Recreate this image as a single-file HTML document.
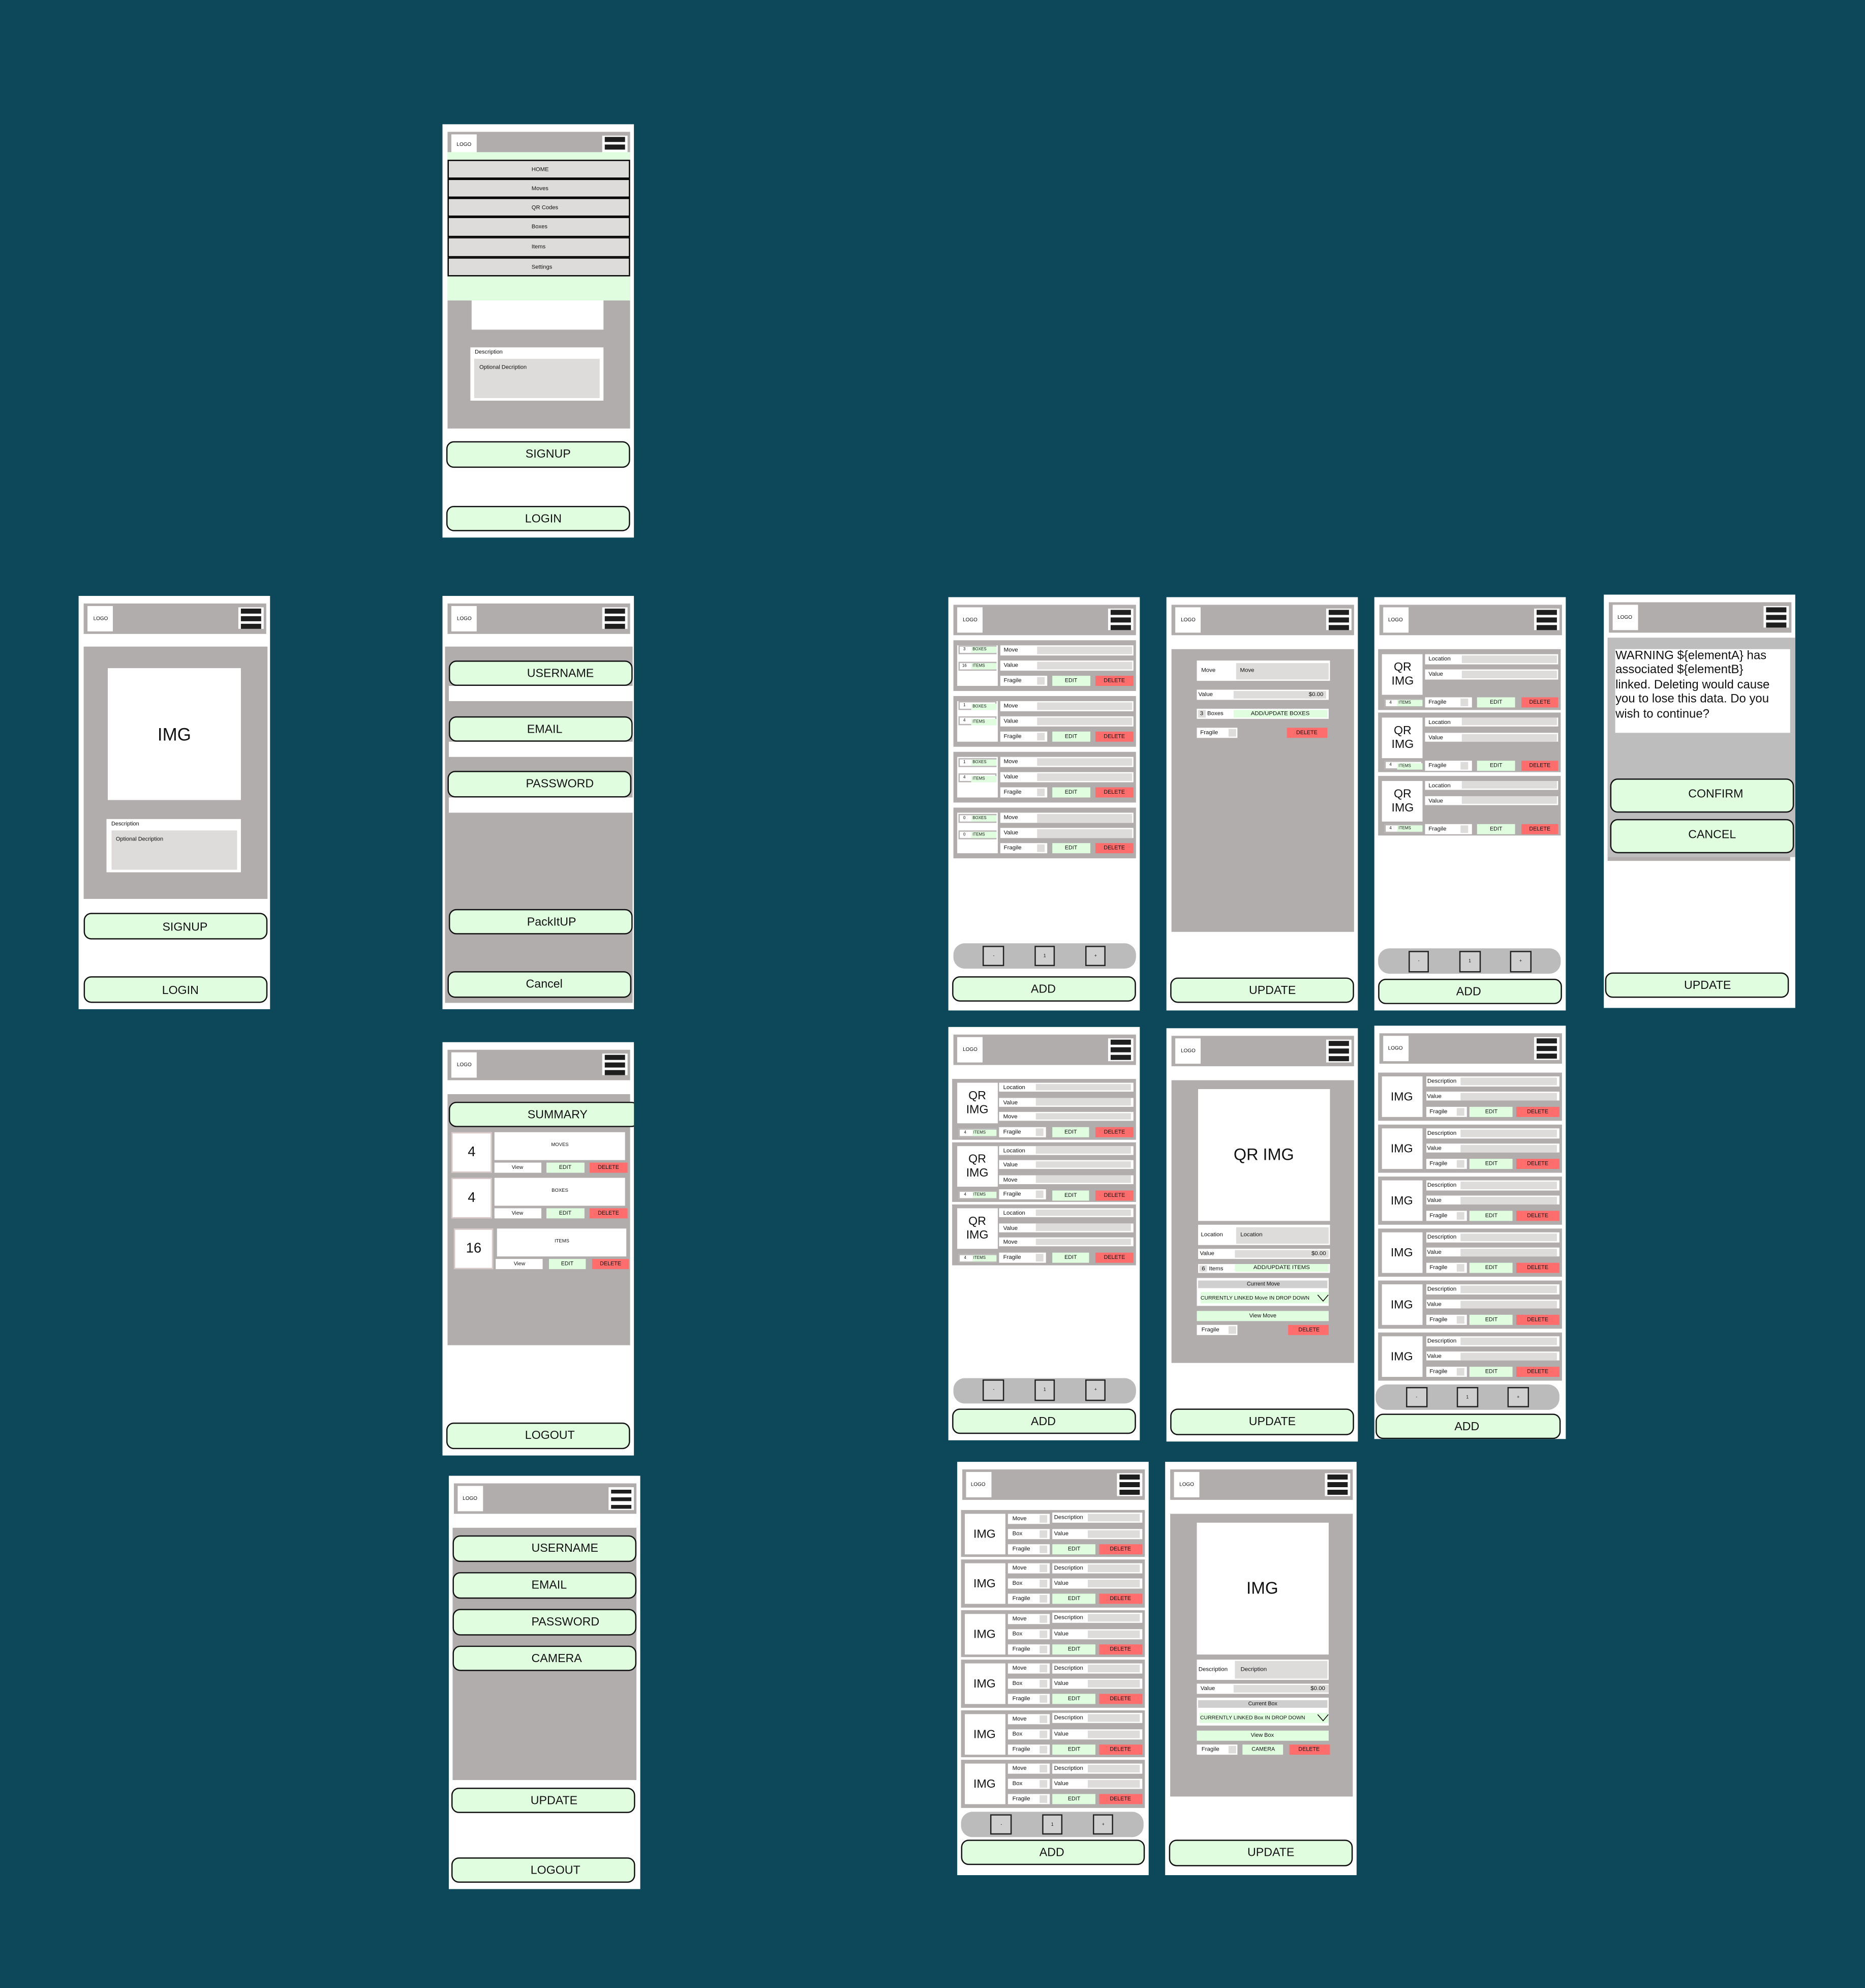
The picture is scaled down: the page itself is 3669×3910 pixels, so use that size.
<!DOCTYPE html>
<html><head><meta charset="utf-8"><style>
html,body{margin:0;padding:0}
body{width:3669px;height:3910px;background:#0c4859;overflow:hidden;position:relative;font-family:"Liberation Sans",Arial,sans-serif;color:#111}
#s{position:absolute;left:0;top:0;width:1471px;height:1568px;transform-origin:0 0;transform:scale(2.4942,2.4936)}
#s div{position:absolute;box-sizing:border-box;white-space:nowrap}
.f{width:151px;height:326px;background:#fff;overflow:hidden}
.hd{left:4px;top:6px;width:144px;height:24px;background:#b1adad}
.lg{left:3px;top:2px;width:20px;height:20px;background:#fff;font-size:4px;line-height:20px;text-align:center}
.hb{left:122px;top:3px;width:20px;height:17.5px;background:#fff}
.hb b{position:absolute;left:2px;width:16px;height:3.8px;background:#1e1e1e}
.hb b:nth-child(1){top:1.3px}.hb b:nth-child(2){top:7.2px}.hb b:nth-child(3){top:13.2px}
.gp{background:#b1adad}
.wh{background:#fff}
.bt{left:2.9px;width:145px;height:20.4px;background:#e0fde0;border:0.5px solid #111;border-radius:6px;font-size:9.3px;line-height:19.4px;padding-left:61px}
.rw{background:#fff;font-size:4.6px;padding-left:3px;height:8px;line-height:8px}
.fd{background:#dedbdb}
.eb{background:#e0fde0;font-size:4.3px;text-align:center;height:8px;line-height:8px}
.db{background:#ff6d6d;font-size:4.3px;text-align:center;height:8px;line-height:8px}
.pg{left:3.6px;width:144.4px;height:20px;background:#bbb;border-radius:9px}
.pg div{top:1.7px;width:16.7px;height:16.6px;background:#cfcfcf;border:0.6px solid #222;font-size:3.5px;text-align:center;line-height:15.4px}
.cb{left:4px;width:30.4px;height:7px;border:0.7px solid #b7b3b3;background:#fff;font-size:3.2px;line-height:5.6px}
.cb .n{left:0.3px;top:0;width:7.2px;height:5.6px;text-align:center}
.cb .q{left:9.3px;top:0.3px;width:19.8px;height:5px;background:#e0fde0;padding-left:1px;line-height:5px}
.mc{left:3.6px;width:144.4px;height:40px;background:#b1adad}
.mc .a{left:3.2px;top:4px;width:32px;height:32px;background:#fff}
.hc{left:3.3px;width:144.4px;height:47.8px;background:#b1adad}
.qi{left:3.3px;top:4px;width:32.1px;height:32px;background:#fff;font-size:9.3px;line-height:11px;text-align:center;padding-top:5px;white-space:normal!important}
.lc{left:3.7px;width:144.4px;height:37.8px;background:#b1adad}
.im{left:2.4px;top:3px;width:32px;height:32px;background:#fff;font-size:9.3px;line-height:32px;text-align:center}
.mi{background:#dedbdb;border:0.5px solid #000;left:4.1px;width:143.6px;font-size:4.5px;padding-left:65px}
.sm{font-size:4.4px}
</style></head><body><div id="s">

<!-- A: menu -->
<div class="f" style="left:349.2px;top:97.9px">
 <div class="gp" style="left:3.6px;top:6.4px;width:144.4px;height:233.3px"></div>
 <div class="wh" style="left:6.8px;top:8.3px;width:20px;height:20px;font-size:4px;line-height:16px;text-align:center">LOGO</div>
 <div class="wh" style="left:125.5px;top:9.6px;width:20px;height:14px"><div style="left:2px;top:0.6px;width:16px;height:3.8px;background:#1e1e1e"></div><div style="left:2px;top:6.6px;width:16px;height:3.8px;background:#1e1e1e"></div></div>
 <div style="left:3.9px;top:22.3px;width:144.1px;height:116.6px;background:#e0fde0"></div>
 <div class="mi" style="top:28.2px;height:15.3px;line-height:14.3px">HOME</div>
 <div class="mi" style="top:43.5px;height:14.4px;line-height:13.4px">Moves</div>
 <div class="mi" style="top:57.9px;height:15.3px;line-height:14.3px">QR Codes</div>
 <div class="mi" style="top:73.2px;height:15.8px;line-height:14.8px">Boxes</div>
 <div class="mi" style="top:89px;height:15.7px;line-height:14.7px">Items</div>
 <div class="mi" style="top:104.7px;height:15.5px;line-height:14.5px">Settings</div>
 <div class="wh" style="left:22.5px;top:139px;width:104.7px;height:23px"></div>
 <div class="wh" style="left:21.7px;top:176.4px;width:105.5px;height:42px"><div class="sm" style="left:3.6px;top:1px">Description</div><div class="fd" style="left:3.6px;top:9.1px;width:98.7px;height:30.4px"><div class="sm" style="left:3.6px;top:4px">Optional Decription</div></div></div>
 <div class="bt" style="left:3.3px;top:250.3px;height:20.6px;line-height:19.6px">SIGNUP</div>
 <div class="bt" style="top:300.8px">LOGIN</div>
</div>

<!-- B: signup img -->
<div class="f" style="left:62.4px;top:469.7px">
 <div class="hd"><div class="lg">LOGO</div><div class="hb"><b></b><b></b><b></b></div></div>
 <div class="gp" style="left:3.7px;top:40.8px;width:145px;height:199px"></div>
 <div class="wh" style="left:22.6px;top:57px;width:105px;height:104.6px;font-size:14px;line-height:104.6px;text-align:center">IMG</div>
 <div class="wh" style="left:22px;top:176px;width:105.6px;height:42.4px"><div class="sm" style="left:3.4px;top:1px">Description</div><div class="fd" style="left:3.4px;top:9.5px;width:99px;height:30.5px"><div class="sm" style="left:3.6px;top:4px">Optional Decription</div></div></div>
 <div class="bt" style="left:3.7px;top:250px;width:145px;height:21px;line-height:20px">SIGNUP</div>
 <div class="bt" style="left:3.4px;top:300.7px;width:145px;height:21px;line-height:20px">LOGIN</div>
</div>

<!-- C: register -->
<div class="f" style="left:349.2px;top:469.7px">
 <div class="hd"><div class="lg">LOGO</div><div class="hb"><b></b><b></b><b></b></div></div>
 <div class="gp" style="left:2px;top:40.8px;width:147.6px;height:281px"></div>
 <div class="wh" style="left:4.7px;top:71.7px;width:145px;height:12.1px"></div>
 <div class="wh" style="left:4.7px;top:115px;width:145px;height:12px"></div>
 <div class="wh" style="left:4.7px;top:159px;width:145px;height:12.5px"></div>
 <div class="bt" style="left:4.5px;top:51.5px;width:145.2px;height:20.2px;line-height:19.2px">USERNAME</div>
 <div class="bt" style="left:4.5px;top:94.9px;width:145.2px;height:20.2px;line-height:19.2px">EMAIL</div>
 <div class="bt" style="left:3.6px;top:138.7px;width:145.2px;height:20.4px;line-height:19.4px">PASSWORD</div>
 <div class="bt" style="left:4.5px;top:247px;width:145.2px;height:20.8px;line-height:19.8px">PackItUP</div>
 <div class="bt" style="left:3.6px;top:296.7px;width:145.2px;height:20.3px;line-height:19.3px">Cancel</div>
</div>

<!-- D: summary -->
<div class="f" style="left:349.2px;top:821.6px">
 <div class="hd"><div class="lg">LOGO</div><div class="hb"><b></b><b></b><b></b></div></div>
 <div class="gp" style="left:3.6px;top:41.2px;width:144.4px;height:198.5px"></div>
 <div class="bt" style="left:4.9px;top:47.1px;width:150px;height:20.4px">SUMMARY</div>
 <div class="wh" style="left:7px;top:71.5px;width:31.7px;height:31.6px;border:0.5px solid #d8c8c8;font-size:11px;line-height:30.6px;text-align:center">4</div>
 <div class="wh" style="left:41.3px;top:71.5px;width:102.3px;height:21.7px;font-size:3.8px;line-height:21.7px;text-align:center">MOVES</div>
 <div class="rw" style="left:40.5px;top:95.3px;width:36.9px;padding:0;text-align:center;font-size:4.2px">View</div>
 <div class="eb" style="left:81.8px;top:95.3px;width:29.7px">EDIT</div>
 <div class="db" style="left:115.9px;top:95.3px;width:29.7px">DELETE</div>
 <div class="wh" style="left:7px;top:107.6px;width:31.7px;height:31.6px;border:0.5px solid #d8c8c8;font-size:11px;line-height:30.6px;text-align:center">4</div>
 <div class="wh" style="left:41.3px;top:107.6px;width:102.3px;height:21.7px;font-size:3.8px;line-height:21.7px;text-align:center">BOXES</div>
 <div class="rw" style="left:40.5px;top:131.4px;width:36.9px;padding:0;text-align:center;font-size:4.2px">View</div>
 <div class="eb" style="left:81.8px;top:131.4px;width:29.7px">EDIT</div>
 <div class="db" style="left:115.9px;top:131.4px;width:29.7px">DELETE</div>
 <div class="wh" style="left:8.6px;top:147.5px;width:31.7px;height:31.6px;border:0.5px solid #d8c8c8;font-size:11px;line-height:30.6px;text-align:center">16</div>
 <div class="wh" style="left:42.9px;top:147.5px;width:102.3px;height:21.7px;font-size:3.8px;line-height:21.7px;text-align:center">ITEMS</div>
 <div class="rw" style="left:42.1px;top:171.3px;width:36.9px;padding:0;text-align:center;font-size:4.2px">View</div>
 <div class="eb" style="left:83.4px;top:171.3px;width:29.7px">EDIT</div>
 <div class="db" style="left:117.5px;top:171.3px;width:29.7px">DELETE</div>
 <div class="bt" style="top:300.8px">LOGOUT</div>
</div>

<!-- E: settings -->
<div class="f" style="left:353.7px;top:1164.4px">
 <div class="hd"><div class="lg">LOGO</div><div class="hb"><b></b><b></b><b></b></div></div>
 <div class="gp" style="left:3.5px;top:41px;width:144.4px;height:198.5px"></div>
 <div class="bt" style="left:3.5px;top:47.1px;width:144.4px">USERNAME</div>
 <div class="bt" style="left:3.5px;top:76px;width:144.4px">EMAIL</div>
 <div class="bt" style="left:3.5px;top:104.9px;width:144.4px">PASSWORD</div>
 <div class="bt" style="left:3.5px;top:133.7px;width:144.4px">CAMERA</div>
 <div class="bt" style="left:2.8px;top:245.6px">UPDATE</div>
 <div class="bt" style="left:2.8px;top:300.6px">LOGOUT</div>
</div>

<!-- F: moves list -->
<div class="f" style="left:748.2px;top:470.8px">
 <div class="hd"><div class="lg">LOGO</div><div class="hb"><b></b><b></b><b></b></div></div>
 <div class="mc" style="top:34px"><div class="a"></div>
  <div class="cb" style="top:4.4px"><div class="n">3</div><div class="q">BOXES</div></div>
  <div class="cb" style="top:17.2px"><div class="n">16</div><div class="q">ITEMS</div></div>
  <div class="rw" style="left:36.9px;top:4px;width:105.5px">Move<div class="fd" style="left:28.9px;top:0.8px;width:75.8px;height:6.4px"></div></div>
  <div class="rw" style="left:36.9px;top:16.1px;width:105.5px">Value<div class="fd" style="left:28.9px;top:0.8px;width:75.8px;height:6.4px"></div></div>
  <div class="rw" style="left:36.9px;top:28px;width:36.9px">Fragile<div class="fd" style="left:28.9px;top:1px;width:6px;height:6px"></div></div>
  <div class="eb" style="left:78.2px;top:28px;width:29.7px">EDIT</div><div class="db" style="left:112.3px;top:28px;width:29.7px">DELETE</div></div>
 <div class="mc" style="top:78.2px"><div class="a"></div>
  <div class="cb" style="top:4.4px"><div class="n">1</div><div class="q">BOXES</div></div>
  <div class="cb" style="top:16.5px"><div class="n">4</div><div class="q">ITEMS</div></div>
  <div class="rw" style="left:36.9px;top:4px;width:105.5px">Move<div class="fd" style="left:28.9px;top:0.8px;width:75.8px;height:6.4px"></div></div>
  <div class="rw" style="left:36.9px;top:16.1px;width:105.5px">Value<div class="fd" style="left:28.9px;top:0.8px;width:75.8px;height:6.4px"></div></div>
  <div class="rw" style="left:36.9px;top:28px;width:36.9px">Fragile<div class="fd" style="left:28.9px;top:1px;width:6px;height:6px"></div></div>
  <div class="eb" style="left:78.2px;top:28px;width:29.7px">EDIT</div><div class="db" style="left:112.3px;top:28px;width:29.7px">DELETE</div></div>
 <div class="mc" style="top:122.4px"><div class="a"></div>
  <div class="cb" style="top:4.4px"><div class="n">1</div><div class="q">BOXES</div></div>
  <div class="cb" style="top:17.2px"><div class="n">4</div><div class="q">ITEMS</div></div>
  <div class="rw" style="left:36.9px;top:4px;width:105.5px">Move<div class="fd" style="left:28.9px;top:0.8px;width:75.8px;height:6.4px"></div></div>
  <div class="rw" style="left:36.9px;top:16.1px;width:105.5px">Value<div class="fd" style="left:28.9px;top:0.8px;width:75.8px;height:6.4px"></div></div>
  <div class="rw" style="left:36.9px;top:28px;width:36.9px">Fragile<div class="fd" style="left:28.9px;top:1px;width:6px;height:6px"></div></div>
  <div class="eb" style="left:78.2px;top:28px;width:29.7px">EDIT</div><div class="db" style="left:112.3px;top:28px;width:29.7px">DELETE</div></div>
 <div class="mc" style="top:166.6px"><div class="a"></div>
  <div class="cb" style="top:4.4px"><div class="n">0</div><div class="q">BOXES</div></div>
  <div class="cb" style="top:17.2px"><div class="n">0</div><div class="q">ITEMS</div></div>
  <div class="rw" style="left:36.9px;top:4px;width:105.5px">Move<div class="fd" style="left:28.9px;top:0.8px;width:75.8px;height:6.4px"></div></div>
  <div class="rw" style="left:36.9px;top:16.1px;width:105.5px">Value<div class="fd" style="left:28.9px;top:0.8px;width:75.8px;height:6.4px"></div></div>
  <div class="rw" style="left:36.9px;top:28px;width:36.9px">Fragile<div class="fd" style="left:28.9px;top:1px;width:6px;height:6px"></div></div>
  <div class="eb" style="left:78.2px;top:28px;width:29.7px">EDIT</div><div class="db" style="left:112.3px;top:28px;width:29.7px">DELETE</div></div>
 <div class="pg" style="top:273.4px"><div style="left:23.7px">-</div><div style="left:63.9px">1</div><div style="left:104px">+</div></div>
 <div class="bt" style="top:299.3px;height:20.2px">ADD</div>
</div>

<!-- G: move edit -->
<div class="f" style="left:920.2px;top:470.8px">
 <div class="hd"><div class="lg">LOGO</div><div class="hb"><b></b><b></b><b></b></div></div>
 <div class="gp" style="left:3.5px;top:40.8px;width:144.5px;height:223.2px"></div>
 <div class="rw" style="left:24.3px;top:50.7px;width:104.3px;height:15.9px;line-height:15.9px">Move<div class="fd" style="left:30.1px;top:1.7px;width:73.4px;height:12.5px;font-size:4.6px;line-height:12.5px;padding-left:3.5px">Move</div></div>
 <div class="rw" style="left:23.5px;top:73.7px;width:104.5px;padding-left:1.5px">Value<div class="fd" style="left:29.1px;top:1px;width:73px;height:6px;line-height:6px;text-align:right;padding-right:2px">$0.00</div></div>
 <div class="rw" style="left:23.5px;top:88.7px;width:104.5px;height:7.6px;line-height:7.6px;padding-left:8.5px">Boxes<div class="fd" style="left:1.2px;top:1px;width:5.8px;height:5.6px;line-height:5.6px;text-align:center">3</div><div style="left:29.1px;top:1px;width:74px;height:5.6px;line-height:5.6px;background:#e0fde0;text-align:center">ADD/UPDATE BOXES</div></div>
 <div class="rw" style="left:23.5px;top:103.4px;width:32px">Fragile<div class="fd" style="left:25px;top:1px;width:6px;height:6px"></div></div>
 <div class="db" style="left:94.5px;top:103.4px;width:32.1px">DELETE</div>
 <div class="bt" style="top:300px">UPDATE</div>
</div>

<!-- H: boxes QR list -->
<div class="f" style="left:1083.7px;top:470.8px">
 <div class="hd"><div class="lg">LOGO</div><div class="hb"><b></b><b></b><b></b></div></div>
 <div class="hc" style="top:41.2px"><div class="qi">QR IMG</div>
  <div class="rw" style="left:36.8px;top:4px;width:105.6px;height:7.6px;line-height:7.6px">Location<div class="fd" style="left:29.1px;top:0.8px;width:75px;height:6px"></div></div>
  <div class="rw" style="left:36.8px;top:16.1px;width:105.6px;height:7.6px;line-height:7.6px">Value<div class="fd" style="left:29.1px;top:0.8px;width:75px;height:6px"></div></div>
  <div class="cb" style="left:4.9px;top:38.6px;width:30px"><div class="n">4</div><div class="q">ITEMS</div></div>
  <div class="rw" style="left:36.8px;top:38.2px;width:36.8px">Fragile<div class="fd" style="left:28.6px;top:1px;width:6px;height:6px"></div></div>
  <div class="eb" style="left:78.2px;top:38.2px;width:29.7px">EDIT</div><div class="db" style="left:112.7px;top:38.2px;width:29.7px">DELETE</div></div>
 <div class="hc" style="top:90.9px"><div class="qi">QR IMG</div>
  <div class="rw" style="left:36.8px;top:4px;width:105.6px;height:7.6px;line-height:7.6px">Location<div class="fd" style="left:29.1px;top:0.8px;width:75px;height:6px"></div></div>
  <div class="rw" style="left:36.8px;top:16.1px;width:105.6px;height:7.6px;line-height:7.6px">Value<div class="fd" style="left:29.1px;top:0.8px;width:75px;height:6px"></div></div>
  <div class="cb" style="left:4.9px;top:38.6px;width:30px"><div class="n">4</div><div class="q">ITEMS</div></div>
  <div class="rw" style="left:36.8px;top:38.2px;width:36.8px">Fragile<div class="fd" style="left:28.6px;top:1px;width:6px;height:6px"></div></div>
  <div class="eb" style="left:78.2px;top:38.2px;width:29.7px">EDIT</div><div class="db" style="left:112.7px;top:38.2px;width:29.7px">DELETE</div></div>
 <div class="hc" style="top:140.8px"><div class="qi">QR IMG</div>
  <div class="rw" style="left:36.8px;top:4px;width:105.6px;height:7.6px;line-height:7.6px">Location<div class="fd" style="left:29.1px;top:0.8px;width:75px;height:6px"></div></div>
  <div class="rw" style="left:36.8px;top:16.1px;width:105.6px;height:7.6px;line-height:7.6px">Value<div class="fd" style="left:29.1px;top:0.8px;width:75px;height:6px"></div></div>
  <div class="cb" style="left:4.9px;top:38.6px;width:30px"><div class="n">4</div><div class="q">ITEMS</div></div>
  <div class="rw" style="left:36.8px;top:38.2px;width:36.8px">Fragile<div class="fd" style="left:28.6px;top:1px;width:6px;height:6px"></div></div>
  <div class="eb" style="left:78.2px;top:38.2px;width:29.7px">EDIT</div><div class="db" style="left:112.7px;top:38.2px;width:29.7px">DELETE</div></div>
 <div class="pg" style="left:3.3px;top:277.5px;height:19.5px"><div style="left:23.7px">-</div><div style="left:64px">1</div><div style="left:104.1px">+</div></div>
 <div class="bt" style="top:300.8px">ADD</div>
</div>

<!-- I: warning -->
<div class="f" style="left:1264.6px;top:468.8px">
 <div class="hd"><div class="lg">LOGO</div><div class="hb"><b></b><b></b><b></b></div></div>
 <div class="gp" style="left:3.2px;top:34.4px;width:144.2px;height:176.2px"></div>
 <div style="left:3.2px;top:34.4px;width:148px;height:172.4px;background:#bdbdbd"></div>
 <div class="wh" style="left:9.6px;top:42.9px;width:137.6px;height:66.7px;font-size:9.6px;line-height:11.6px;padding-top:0">WARNING ${elementA} has<br>associated ${elementB}<br>linked. Deleting would cause<br>you to lose this data. Do you<br>wish to continue?</div>
 <div class="bt" style="left:5.3px;top:145.6px;width:144.8px;height:26.3px;line-height:22px;padding-left:60.7px">CONFIRM</div>
 <div class="bt" style="left:5.3px;top:177.7px;width:144.8px;height:26.3px;line-height:22px;padding-left:60.7px">CANCEL</div>
 <div class="bt" style="left:1.7px;top:298.3px;width:144.7px">UPDATE</div>
</div>

<!-- J: boxes QR list with move -->
<div class="f" style="left:748.2px;top:810px">
 <div class="hd"><div class="lg">LOGO</div><div class="hb"><b></b><b></b><b></b></div></div>
 <div class="hc" style="top:41px"><div class="qi" style="top:3px">QR IMG</div>
  <div class="rw" style="left:36.8px;top:3px;width:105.6px;height:7px;line-height:7px">Location<div class="fd" style="left:29.1px;top:0.7px;width:75px;height:5.6px"></div></div>
  <div class="rw" style="left:36.8px;top:14.5px;width:105.6px;height:7px;line-height:7px">Value<div class="fd" style="left:29.1px;top:0.7px;width:75px;height:5.6px"></div></div>
  <div class="rw" style="left:36.8px;top:26px;width:105.6px;height:7px;line-height:7px">Move<div class="fd" style="left:29.1px;top:0.7px;width:75px;height:5.6px"></div></div>
  <div class="cb" style="left:4.9px;top:38.6px;width:30px"><div class="n">4</div><div class="q">ITEMS</div></div>
  <div class="rw" style="left:36.8px;top:37.5px;width:36.8px">Fragile<div class="fd" style="left:28.6px;top:1px;width:6px;height:6px"></div></div>
  <div class="eb" style="left:78.2px;top:38.2px;width:29.7px">EDIT</div><div class="db" style="left:112.7px;top:38.2px;width:29.7px">DELETE</div></div>
 <div class="hc" style="top:90.6px"><div class="qi" style="top:3px">QR IMG</div>
  <div class="rw" style="left:36.8px;top:3px;width:105.6px;height:7px;line-height:7px">Location<div class="fd" style="left:29.1px;top:0.7px;width:75px;height:5.6px"></div></div>
  <div class="rw" style="left:36.8px;top:14.5px;width:105.6px;height:7px;line-height:7px">Value<div class="fd" style="left:29.1px;top:0.7px;width:75px;height:5.6px"></div></div>
  <div class="rw" style="left:36.8px;top:26px;width:105.6px;height:7px;line-height:7px">Move<div class="fd" style="left:29.1px;top:0.7px;width:75px;height:5.6px"></div></div>
  <div class="cb" style="left:4.9px;top:38.6px;width:30px"><div class="n">4</div><div class="q">ITEMS</div></div>
  <div class="rw" style="left:36.8px;top:37.5px;width:36.8px">Fragile<div class="fd" style="left:28.6px;top:1px;width:6px;height:6px"></div></div>
  <div class="eb" style="left:78.2px;top:38.2px;width:29.7px">EDIT</div><div class="db" style="left:112.7px;top:38.2px;width:29.7px">DELETE</div></div>
 <div class="hc" style="top:140.2px"><div class="qi" style="top:3px">QR IMG</div>
  <div class="rw" style="left:36.8px;top:3px;width:105.6px;height:7px;line-height:7px">Location<div class="fd" style="left:29.1px;top:0.7px;width:75px;height:5.6px"></div></div>
  <div class="rw" style="left:36.8px;top:14.5px;width:105.6px;height:7px;line-height:7px">Value<div class="fd" style="left:29.1px;top:0.7px;width:75px;height:5.6px"></div></div>
  <div class="rw" style="left:36.8px;top:26px;width:105.6px;height:7px;line-height:7px">Move<div class="fd" style="left:29.1px;top:0.7px;width:75px;height:5.6px"></div></div>
  <div class="cb" style="left:4.9px;top:38.6px;width:30px"><div class="n">4</div><div class="q">ITEMS</div></div>
  <div class="rw" style="left:36.8px;top:37.5px;width:36.8px">Fragile<div class="fd" style="left:28.6px;top:1px;width:6px;height:6px"></div></div>
  <div class="eb" style="left:78.2px;top:38.2px;width:29.7px">EDIT</div><div class="db" style="left:112.7px;top:38.2px;width:29.7px">DELETE</div></div>
 <div class="pg" style="top:276.5px"><div style="left:23.7px">-</div><div style="left:63.9px">1</div><div style="left:104px">+</div></div>
 <div class="bt" style="top:300.5px">ADD</div>
</div>

<!-- K: QR IMG box edit -->
<div class="f" style="left:920.2px;top:811.2px">
 <div class="hd"><div class="lg">LOGO</div><div class="hb"><b></b><b></b><b></b></div></div>
 <div class="gp" style="left:3.6px;top:40.8px;width:144.4px;height:223.2px"></div>
 <div class="wh" style="left:24.5px;top:47.6px;width:104.3px;height:104.4px;font-size:13px;line-height:104.4px;text-align:center">QR IMG</div>
 <div class="rw" style="left:24.5px;top:155.2px;width:104.3px;height:15.7px;line-height:15.7px;padding-left:2.5px">Location<div class="fd" style="left:30px;top:1.5px;width:73.4px;height:12.8px;line-height:12.8px;padding-left:3.7px">Location</div></div>
 <div class="rw" style="left:24.9px;top:174.3px;width:104px;padding-left:1.3px">Value<div class="fd" style="left:28.8px;top:1px;width:74px;height:6px;line-height:6px;text-align:right;padding-right:2px">$0.00</div></div>
 <div class="rw" style="left:24.9px;top:185.5px;width:104px;height:7.8px;line-height:7.8px;padding-left:8.5px">Items<div class="fd" style="left:1.2px;top:1.2px;width:5.8px;height:5.6px;line-height:5.6px;text-align:center">6</div><div style="left:28.8px;top:0.8px;width:74px;height:6px;line-height:6px;background:#e0fde0;text-align:center">ADD/UPDATE ITEMS</div></div>
 <div class="wh" style="left:23.7px;top:197px;width:104.3px;height:22.3px">
  <div style="left:1.6px;top:1.5px;width:102px;height:6.4px;background:#d0cfcf;font-size:4.3px;line-height:6.4px;text-align:center">Current Move</div>
  <div style="left:2.8px;top:11px;width:101.5px;height:9.2px;background:#e0fde0;font-size:4.2px;line-height:9.2px;padding-left:0.3px">CURRENTLY LINKED Move IN DROP DOWN</div>
  <svg style="position:absolute;left:95px;top:13px" width="9" height="6" viewBox="0 0 9 6"><path d="M0.3 0.3 L4.6 5.2 L8.7 0.3" fill="none" stroke="#000" stroke-width="0.6"/></svg>
 </div>
 <div class="eb" style="left:23.7px;top:222.5px;width:104.3px;font-size:4.4px">View Move</div>
 <div class="rw" style="left:23.7px;top:233.7px;width:32px;padding-left:3.8px">Fragile<div class="fd" style="left:24.8px;top:1px;width:6px;height:6px"></div></div>
 <div class="db" style="left:96.3px;top:233.7px;width:32px">DELETE</div>
 <div class="bt" style="left:2.8px;top:300.2px;height:20.6px;line-height:19.6px">UPDATE</div>
</div>

<!-- L: items list -->
<div class="f" style="left:1083.6px;top:809px">
 <div class="hd"><div class="lg">LOGO</div><div class="hb"><b></b><b></b><b></b></div></div>
 <div class="lc" style="top:37.4px"><div class="im">IMG</div>
  <div class="rw" style="left:37.3px;top:3px;width:105px;height:7.2px;line-height:7.2px;padding-left:1.2px">Description<div class="fd" style="left:27.3px;top:0.6px;width:76.5px;height:6px"></div></div>
  <div class="rw" style="left:37.3px;top:14.9px;width:105px;height:7.2px;line-height:7.2px;padding-left:1px">Value<div class="fd" style="left:27.3px;top:0.6px;width:76.5px;height:6px"></div></div>
  <div class="rw" style="left:37.3px;top:27px;width:32px">Fragile<div class="fd" style="left:24.1px;top:1px;width:6.4px;height:6px"></div></div>
  <div class="eb" style="left:72.2px;top:27px;width:33.7px">EDIT</div><div class="db" style="left:108.7px;top:27px;width:33.7px">DELETE</div></div>
 <div class="lc" style="top:78.4px"><div class="im">IMG</div>
  <div class="rw" style="left:37.3px;top:3px;width:105px;height:7.2px;line-height:7.2px;padding-left:1.2px">Description<div class="fd" style="left:27.3px;top:0.6px;width:76.5px;height:6px"></div></div>
  <div class="rw" style="left:37.3px;top:14.9px;width:105px;height:7.2px;line-height:7.2px;padding-left:1px">Value<div class="fd" style="left:27.3px;top:0.6px;width:76.5px;height:6px"></div></div>
  <div class="rw" style="left:37.3px;top:27px;width:32px">Fragile<div class="fd" style="left:24.1px;top:1px;width:6.4px;height:6px"></div></div>
  <div class="eb" style="left:72.2px;top:27px;width:33.7px">EDIT</div><div class="db" style="left:108.7px;top:27px;width:33.7px">DELETE</div></div>
 <div class="lc" style="top:119.4px"><div class="im">IMG</div>
  <div class="rw" style="left:37.3px;top:3px;width:105px;height:7.2px;line-height:7.2px;padding-left:1.2px">Description<div class="fd" style="left:27.3px;top:0.6px;width:76.5px;height:6px"></div></div>
  <div class="rw" style="left:37.3px;top:14.9px;width:105px;height:7.2px;line-height:7.2px;padding-left:1px">Value<div class="fd" style="left:27.3px;top:0.6px;width:76.5px;height:6px"></div></div>
  <div class="rw" style="left:37.3px;top:27px;width:32px">Fragile<div class="fd" style="left:24.1px;top:1px;width:6.4px;height:6px"></div></div>
  <div class="eb" style="left:72.2px;top:27px;width:33.7px">EDIT</div><div class="db" style="left:108.7px;top:27px;width:33.7px">DELETE</div></div>
 <div class="lc" style="top:160.4px"><div class="im">IMG</div>
  <div class="rw" style="left:37.3px;top:3px;width:105px;height:7.2px;line-height:7.2px;padding-left:1.2px">Description<div class="fd" style="left:27.3px;top:0.6px;width:76.5px;height:6px"></div></div>
  <div class="rw" style="left:37.3px;top:14.9px;width:105px;height:7.2px;line-height:7.2px;padding-left:1px">Value<div class="fd" style="left:27.3px;top:0.6px;width:76.5px;height:6px"></div></div>
  <div class="rw" style="left:37.3px;top:27px;width:32px">Fragile<div class="fd" style="left:24.1px;top:1px;width:6.4px;height:6px"></div></div>
  <div class="eb" style="left:72.2px;top:27px;width:33.7px">EDIT</div><div class="db" style="left:108.7px;top:27px;width:33.7px">DELETE</div></div>
 <div class="lc" style="top:201.4px"><div class="im">IMG</div>
  <div class="rw" style="left:37.3px;top:3px;width:105px;height:7.2px;line-height:7.2px;padding-left:1.2px">Description<div class="fd" style="left:27.3px;top:0.6px;width:76.5px;height:6px"></div></div>
  <div class="rw" style="left:37.3px;top:14.9px;width:105px;height:7.2px;line-height:7.2px;padding-left:1px">Value<div class="fd" style="left:27.3px;top:0.6px;width:76.5px;height:6px"></div></div>
  <div class="rw" style="left:37.3px;top:27px;width:32px">Fragile<div class="fd" style="left:24.1px;top:1px;width:6.4px;height:6px"></div></div>
  <div class="eb" style="left:72.2px;top:27px;width:33.7px">EDIT</div><div class="db" style="left:108.7px;top:27px;width:33.7px">DELETE</div></div>
 <div class="lc" style="top:242.4px"><div class="im">IMG</div>
  <div class="rw" style="left:37.3px;top:3px;width:105px;height:7.2px;line-height:7.2px;padding-left:1.2px">Description<div class="fd" style="left:27.3px;top:0.6px;width:76.5px;height:6px"></div></div>
  <div class="rw" style="left:37.3px;top:14.9px;width:105px;height:7.2px;line-height:7.2px;padding-left:1px">Value<div class="fd" style="left:27.3px;top:0.6px;width:76.5px;height:6px"></div></div>
  <div class="rw" style="left:37.3px;top:27px;width:32px">Fragile<div class="fd" style="left:24.1px;top:1px;width:6.4px;height:6px"></div></div>
  <div class="eb" style="left:72.2px;top:27px;width:33.7px">EDIT</div><div class="db" style="left:108.7px;top:27px;width:33.7px">DELETE</div></div>
 <div class="pg" style="left:1.6px;top:283px"><div style="left:23.8px">-</div><div style="left:63.9px">1</div><div style="left:104px">+</div></div>
 <div class="bt" style="left:1.6px;top:306px;width:145.5px">ADD</div>
</div>

<!-- M: items list w/ move+box -->
<div class="f" style="left:754.5px;top:1153.2px">
 <div class="hd"><div class="lg">LOGO</div><div class="hb"><b></b><b></b><b></b></div></div>
 <div class="lc" style="top:37.8px;height:37.4px"><div class="im" style="top:2.8px;height:31.8px">IMG</div>
  <div class="rw" style="left:37.3px;top:2.8px;width:32.1px">Move<div class="fd" style="left:24.1px;top:1px;width:6.4px;height:6px"></div></div>
  <div class="rw" style="left:37.3px;top:14.9px;width:32.1px">Box<div class="fd" style="left:24.1px;top:1px;width:6.4px;height:6px"></div></div>
  <div class="rw" style="left:37.3px;top:26.7px;width:32.1px">Fragile<div class="fd" style="left:24.1px;top:1px;width:6.4px;height:6px"></div></div>
  <div class="rw" style="left:72.2px;top:2.5px;width:70.2px;padding-left:1px">Description<div class="fd" style="left:27.3px;top:1px;width:41.7px;height:6px"></div></div>
  <div class="rw" style="left:72.2px;top:14.9px;width:70.2px;padding-left:1px">Value<div class="fd" style="left:27.3px;top:1px;width:41.7px;height:6px"></div></div>
  <div class="eb" style="left:72.2px;top:26.7px;width:33.7px">EDIT</div><div class="db" style="left:108.7px;top:26.7px;width:33.7px">DELETE</div></div>
 <div class="lc" style="top:77.3px;height:37.4px"><div class="im" style="top:2.8px;height:31.8px">IMG</div>
  <div class="rw" style="left:37.3px;top:2.8px;width:32.1px">Move<div class="fd" style="left:24.1px;top:1px;width:6.4px;height:6px"></div></div>
  <div class="rw" style="left:37.3px;top:14.9px;width:32.1px">Box<div class="fd" style="left:24.1px;top:1px;width:6.4px;height:6px"></div></div>
  <div class="rw" style="left:37.3px;top:26.7px;width:32.1px">Fragile<div class="fd" style="left:24.1px;top:1px;width:6.4px;height:6px"></div></div>
  <div class="rw" style="left:72.2px;top:2.5px;width:70.2px;padding-left:1px">Description<div class="fd" style="left:27.3px;top:1px;width:41.7px;height:6px"></div></div>
  <div class="rw" style="left:72.2px;top:14.9px;width:70.2px;padding-left:1px">Value<div class="fd" style="left:27.3px;top:1px;width:41.7px;height:6px"></div></div>
  <div class="eb" style="left:72.2px;top:26.7px;width:33.7px">EDIT</div><div class="db" style="left:108.7px;top:26.7px;width:33.7px">DELETE</div></div>
 <div class="lc" style="top:116.8px;height:37.4px"><div class="im" style="top:2.8px;height:31.8px">IMG</div>
  <div class="rw" style="left:37.3px;top:2.8px;width:32.1px">Move<div class="fd" style="left:24.1px;top:1px;width:6.4px;height:6px"></div></div>
  <div class="rw" style="left:37.3px;top:14.9px;width:32.1px">Box<div class="fd" style="left:24.1px;top:1px;width:6.4px;height:6px"></div></div>
  <div class="rw" style="left:37.3px;top:26.7px;width:32.1px">Fragile<div class="fd" style="left:24.1px;top:1px;width:6.4px;height:6px"></div></div>
  <div class="rw" style="left:72.2px;top:2.5px;width:70.2px;padding-left:1px">Description<div class="fd" style="left:27.3px;top:1px;width:41.7px;height:6px"></div></div>
  <div class="rw" style="left:72.2px;top:14.9px;width:70.2px;padding-left:1px">Value<div class="fd" style="left:27.3px;top:1px;width:41.7px;height:6px"></div></div>
  <div class="eb" style="left:72.2px;top:26.7px;width:33.7px">EDIT</div><div class="db" style="left:108.7px;top:26.7px;width:33.7px">DELETE</div></div>
 <div class="lc" style="top:156.3px;height:37.4px"><div class="im" style="top:2.8px;height:31.8px">IMG</div>
  <div class="rw" style="left:37.3px;top:2.8px;width:32.1px">Move<div class="fd" style="left:24.1px;top:1px;width:6.4px;height:6px"></div></div>
  <div class="rw" style="left:37.3px;top:14.9px;width:32.1px">Box<div class="fd" style="left:24.1px;top:1px;width:6.4px;height:6px"></div></div>
  <div class="rw" style="left:37.3px;top:26.7px;width:32.1px">Fragile<div class="fd" style="left:24.1px;top:1px;width:6.4px;height:6px"></div></div>
  <div class="rw" style="left:72.2px;top:2.5px;width:70.2px;padding-left:1px">Description<div class="fd" style="left:27.3px;top:1px;width:41.7px;height:6px"></div></div>
  <div class="rw" style="left:72.2px;top:14.9px;width:70.2px;padding-left:1px">Value<div class="fd" style="left:27.3px;top:1px;width:41.7px;height:6px"></div></div>
  <div class="eb" style="left:72.2px;top:26.7px;width:33.7px">EDIT</div><div class="db" style="left:108.7px;top:26.7px;width:33.7px">DELETE</div></div>
 <div class="lc" style="top:195.8px;height:37.4px"><div class="im" style="top:2.8px;height:31.8px">IMG</div>
  <div class="rw" style="left:37.3px;top:2.8px;width:32.1px">Move<div class="fd" style="left:24.1px;top:1px;width:6.4px;height:6px"></div></div>
  <div class="rw" style="left:37.3px;top:14.9px;width:32.1px">Box<div class="fd" style="left:24.1px;top:1px;width:6.4px;height:6px"></div></div>
  <div class="rw" style="left:37.3px;top:26.7px;width:32.1px">Fragile<div class="fd" style="left:24.1px;top:1px;width:6.4px;height:6px"></div></div>
  <div class="rw" style="left:72.2px;top:2.5px;width:70.2px;padding-left:1px">Description<div class="fd" style="left:27.3px;top:1px;width:41.7px;height:6px"></div></div>
  <div class="rw" style="left:72.2px;top:14.9px;width:70.2px;padding-left:1px">Value<div class="fd" style="left:27.3px;top:1px;width:41.7px;height:6px"></div></div>
  <div class="eb" style="left:72.2px;top:26.7px;width:33.7px">EDIT</div><div class="db" style="left:108.7px;top:26.7px;width:33.7px">DELETE</div></div>
 <div class="lc" style="top:235.3px;height:37.4px"><div class="im" style="top:2.8px;height:31.8px">IMG</div>
  <div class="rw" style="left:37.3px;top:2.8px;width:32.1px">Move<div class="fd" style="left:24.1px;top:1px;width:6.4px;height:6px"></div></div>
  <div class="rw" style="left:37.3px;top:14.9px;width:32.1px">Box<div class="fd" style="left:24.1px;top:1px;width:6.4px;height:6px"></div></div>
  <div class="rw" style="left:37.3px;top:26.7px;width:32.1px">Fragile<div class="fd" style="left:24.1px;top:1px;width:6.4px;height:6px"></div></div>
  <div class="rw" style="left:72.2px;top:2.5px;width:70.2px;padding-left:1px">Description<div class="fd" style="left:27.3px;top:1px;width:41.7px;height:6px"></div></div>
  <div class="rw" style="left:72.2px;top:14.9px;width:70.2px;padding-left:1px">Value<div class="fd" style="left:27.3px;top:1px;width:41.7px;height:6px"></div></div>
  <div class="eb" style="left:72.2px;top:26.7px;width:33.7px">EDIT</div><div class="db" style="left:108.7px;top:26.7px;width:33.7px">DELETE</div></div>
 <div class="pg" style="left:3.3px;top:275.8px"><div style="left:23.7px">-</div><div style="left:63.9px">1</div><div style="left:104px">+</div></div>
 <div class="bt" style="left:3.3px;top:297.4px;height:20.6px;line-height:19.6px">ADD</div>
</div>

<!-- N: item edit -->
<div class="f" style="left:919px;top:1153.2px">
 <div class="hd"><div class="lg">LOGO</div><div class="hb"><b></b><b></b><b></b></div></div>
 <div class="gp" style="left:3.6px;top:41.2px;width:144.4px;height:223.1px"></div>
 <div class="wh" style="left:24.5px;top:48px;width:104.3px;height:104px;font-size:13.3px;line-height:104px;text-align:center">IMG</div>
 <div class="rw" style="left:24.5px;top:155.4px;width:104.3px;height:16px;line-height:16px;padding-left:1.8px">Description<div class="fd" style="left:30px;top:1px;width:73.4px;height:14px;line-height:14.5px;padding-left:5px">Decription</div></div>
 <div class="rw" style="left:24.9px;top:174.5px;width:104.3px">Value<div class="fd" style="left:28.8px;top:1px;width:75.5px;height:6px;line-height:6px;text-align:right;padding-right:3px">$0.00</div></div>
 <div class="wh" style="left:24.5px;top:186px;width:104.3px;height:22.3px">
  <div style="left:1.5px;top:1.7px;width:102px;height:6.4px;background:#d0cfcf;font-size:4.3px;line-height:6.4px;text-align:center">Current Box</div>
  <div style="left:2.8px;top:11.4px;width:101.5px;height:8.9px;background:#e0fde0;font-size:4.2px;line-height:8.9px;padding-left:0.3px">CURRENTLY LINKED Box IN DROP DOWN</div>
  <svg style="position:absolute;left:95px;top:13.2px" width="9" height="6" viewBox="0 0 9 6"><path d="M0.3 0.3 L4.6 5.2 L8.7 0.3" fill="none" stroke="#000" stroke-width="0.6"/></svg>
 </div>
 <div class="eb" style="left:24.5px;top:211.7px;width:104.3px;font-size:4.4px">View Box</div>
 <div class="rw" style="left:24.9px;top:223px;width:32px;padding-left:3.8px">Fragile<div class="fd" style="left:24.7px;top:1px;width:6px;height:6px"></div></div>
 <div class="eb" style="left:61.4px;top:223px;width:32px">CAMERA</div>
 <div class="db" style="left:97.5px;top:223px;width:32px">DELETE</div>
 <div class="bt" style="top:298.3px">UPDATE</div>
</div>

</div></body></html>
